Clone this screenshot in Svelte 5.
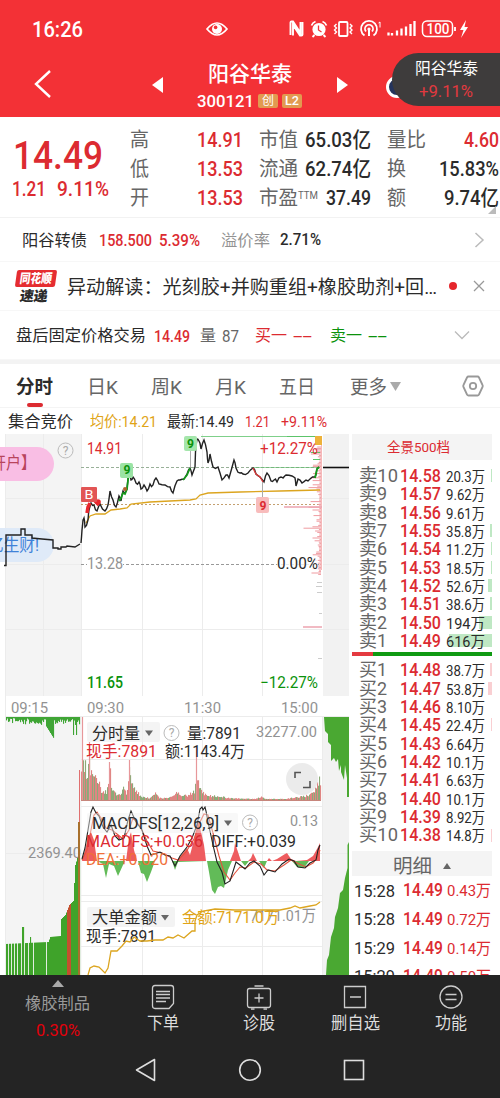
<script lang="ts">
    type Point = [number, number];

    const quotes = [
        [['高', 19], ['14.91', 46, 'red'], ['市值', 39], ['65.03亿', 66, 'dark'], ['量比', 39], ['4.60', 35, 'red']],
        [['低', 19], ['13.53', 46, 'red'], ['流通', 39], ['62.74亿', 66, 'dark'], ['换', 19], ['15.83%', 60, 'dark']],
        [['开', 19], ['13.53', 46, 'red'], ['市盈', 39], ['37.49', 45, 'dark'], ['额', 19], ['9.74亿', 55, 'dark']]
    ] as [string, number, string?][][];

    const tabs: [string, number][] = [['日K', 31], ['周K', 31], ['月K', 31], ['五日', 36]];

    // price, amount, depth bar width
    const sells: [string, string, number][] = [
        ['14.58', '20.3万', 1], ['14.57', '9.62万', 0], ['14.56', '9.61万', 0], ['14.55', '35.8万', 2],
        ['14.54', '11.2万', 1], ['14.53', '18.5万', 1], ['14.52', '52.6万', 4], ['14.51', '38.6万', 2],
        ['14.50', '194万', 13], ['14.49', '616万', 43]
    ];
    const buys: [string, string, number][] = [
        ['14.48', '38.7万', 2], ['14.47', '53.8万', 4], ['14.46', '8.10万', 0], ['14.45', '22.4万', 1],
        ['14.43', '6.64万', 0], ['14.42', '10.1万', 0], ['14.41', '6.63万', 0], ['14.40', '10.1万', 0],
        ['14.39', '8.92万', 0], ['14.38', '14.8万', 1]
    ];
    const deals = [['15:28', '0.43万'], ['15:28', '0.72万'], ['15:29', '0.14万'], ['15:29', '0.50万']];

    const auction = '4,565.5 6,565.5 6,535 21,535 21,529 25,529 25,535 32,535 32,538 42,539 53,540 53,548 58,548 58,549 61,549 61,547 66,547 67,546 75,547 80,544';
    const price: Point[] = [
        [81, 543], [82, 530], [83, 520], [84, 518], [85, 527], [88, 520], [89, 510], [91, 503], [94, 505], [97, 511],
        [100, 504], [105, 511], [108, 505], [110, 491], [113, 500], [116, 507], [119, 496], [121, 501], [123, 491],
        [125, 493], [127, 489], [129, 471], [131, 480], [133, 477], [136, 483], [139, 482], [141, 489], [144, 485],
        [147, 491], [150, 484], [153, 485], [156, 478], [159, 484], [165, 485], [170, 487], [173, 493], [177, 481],
        [180, 480], [184, 479], [187, 474], [190, 468], [192, 475], [195, 467], [195.5, 452], [197, 439], [199, 441],
        [201, 449], [204, 440], [207, 452], [208, 463], [210, 454], [213, 467], [218, 467], [222, 480], [226, 475],
        [229, 478], [234, 460], [236, 468], [240, 473], [243, 474], [248, 473], [253, 468], [256, 474], [260, 477],
        [264, 482], [267, 473], [271, 481], [274, 480], [277, 482], [281, 477], [283, 478], [286, 475], [292, 476],
        [295, 478], [296, 486], [298, 479], [302, 483], [306, 480], [310, 479], [315, 477], [317, 469], [319, 467]
    ];
    const average = '86,523 90,516 96,514 105,514 111,510 120,509 127,508 131,504 150,502 170,501 190,500 196,499 200,495 208,493 240,492 280,491 320,490';

    const diff = '82,859 85,848 88,830 91,812 93,807 96,813 99,816 103,827 107,832 111,825 115,836 119,840 124,838 128,820 131,811 136,822 142,830 147,846 151,855 160,852 165,855 170,856 175,866 180,856 187,847 192,838 197,825 200,809 202,807 203,810 205,807 206,811 208,822 213,845 217,862 222,872 225,884 230,881 236,862 240,865 245,869 250,863 254,861 260,866 264,875 268,870 275,872 282,864 289,859 294,861 298,867 305,868 310,863 316,860 318,850 320,845';
    const dea = '82,860 87,850 91,830 94,815 97,812 101,818 106,828 112,830 117,834 123,839 129,830 133,818 140,826 147,841 153,851 162,853 172,858 178,860 186,852 194,839 200,822 204,814 208,815 213,833 219,856 224,872 230,880 235,873 240,867 246,868 254,862 261,864 267,870 275,871 284,865 291,860 299,864 306,867 313,863 317,858 320,850';
    const bigOrders = '88,975 90,968 94,966 99,967 105,973 108,968 111,951 117,951 122,946 126,941 130,942 134,937 140,941 147,941 155,940 163,940 168,937 173,938 178,935 184,938 192,931 195,931 195,921 197,915 203,911 215,909 235,910 262,910 280,910 290,908 295,906 300,908 310,906 316,905 320,902';

    function noise(i: number): number {
        const v = Math.sin(i * 127.1 + 11.7) * 43758.5453;
        return v - Math.floor(v);
    }

    // subdivides a line and shakes the inner points
    function jitter(points: Point[], amount: number): string {
        return points.map(([x, y], i) => {
            const next = points[i + 1];
            if (!next) return `${x},${y}`;
            const midY = (y + next[1]) / 2 + (noise(i) - .5) * amount;
            return `${x},${y} ${(x + next[0]) / 2},${midY.toFixed(1)}`;
        }).join(' ');
    }

    function between(points: Point[], x: number): number {
        for (let i = 1; i < points.length; i++) {
            const [x0, y0] = points[i - 1];
            const [x1, y1] = points[i];
            if (x <= x1) return y0 + (y1 - y0) * (x - x0) / (x1 - x0);
        }
        return points[points.length - 1][1];
    }

    const volumeShape: Point[] = [
        [82, 30], [84, 44], [86, 28], [88, 22], [89, 40], [91, 26], [95, 20], [99, 20], [102, 8], [107, 8], [110, 30],
        [112, 12], [116, 6], [121, 6], [124, 16], [127, 6], [129, 32], [131, 16], [135, 12], [140, 4], [150, 2],
        [156, 8], [159, 2], [168, 2], [174, 4], [178, 8], [183, 4], [188, 5], [192, 7], [195, 8], [197, 30], [199, 12],
        [203, 8], [210, 4], [217, 4], [222, 4], [227, 2], [255, 1], [262, 3], [266, 1], [285, 1], [292, 2], [305, 4],
        [312, 6], [317, 14], [320, 20]
    ];
    const volume = Array.from({ length: 240 }, (_, i) => {
        const x = 81.5 + i;
        const h = between(volumeShape, x) * (.65 + noise(i) * .6);
        return { x, h: Math.max(1, h), up: noise(i + 400) > .48 };
    });

    const leftShape: Point[] = [[5, 31], [48, 33], [50, 38], [60, 39], [61, 56], [65, 60], [69, 70], [73, 74], [75, 110], [77, 117], [81, 117]];
    const gaps = [8, 11, 14, 17, 21, 24, 28, 33, 46];
    const leftBars = Array.from({ length: 74 }, (_, i) => {
        const x = 6 + i;
        return { x, h: x === 22 || x === 23 ? 48 : x === 30 ? 38 : between(leftShape, x), red: x >= 67 && x <= 70 };
    }).filter(it => !gaps.includes(it.x));
    const leftHanging = Array.from({ length: 74 }, (_, i) => {
        const x = 6 + i;
        let h = 1 + noise(i + 60) * 7;
        if (x > 45 && x < 54) h = 8 + (x - 45) * 1.6;
        if (x === 73 || x === 76) h = 18;
        if (x > 54 && x < 70) h = 2 + noise(i) * 5;
        return { x, h };
    });

    const redHills = '82,861 85,850 88,838 91,832 94,840 97,861 126,861 129,838 131,832 134,850 137,861 177,861 183,853 187,848 190,855 194,840 198,820 202,836 204,845 206,861 230,861 234,851 235,843 238,852 241,861 248,861 251,858 253,853 257,861 267,861 269,858 272,861 277,859 285,854 287,853 291,859 296,861 307,860 313,856 317,849 320,843 320,861';
    const greenHills = '97,861 103,864 106,878 109,864 114,866 118,876 123,865 125,861 138,861 141,873 144,874 147,882 151,872 155,861 172,861 175,870 178,862 207,861 209,872 212,890 215,894 218,887 221,886 224,888 228,870 232,861 241,861 245,866 249,861 259,861 264,868 267,861 292,861 297,867 304,868 309,861';

    const profile = Array.from({ length: 92 }, (_, i) => {
        const y = 447 + i * 1.4;
        const long: Record<number, number> = { 43: 12, 58: 17, 45: 8, 49: 7, 65: 8, 29: 12 };
        return { y, w: long[i] ?? 1 + Math.pow(noise(i + 90), 3) * 9 };
    });

    const actions = [['下单', 32], ['诊股', 32], ['删自选', 49], ['功能', 32]] as [string, number][];
</script>

{#snippet txt(text: string, width: number, size: number, kind = '')}
    <svg class="txt {kind}" {width} height={size}>
        <text x="0" y={size * .87} font-size={size} textLength={width} lengthAdjust="spacingAndGlyphs">{text}</text>
    </svg>
{/snippet}

{#snippet label(x: number, middle: number, text: string, width: number, size: number, kind = 'gray')}
    <text class={kind} {x} y={middle + size * .37} font-size={size} textLength={width} lengthAdjust="spacingAndGlyphs">{text}</text>
{/snippet}

{#snippet help(x: number, y: number)}
    <circle cx={x} cy={y} r="7.5" fill="none" stroke="#bbb" />
    <text class="help" {x} y={y + 4} font-size="12" text-anchor="middle">?</text>
{/snippet}

{#snippet level(name: string, wide: boolean, value: string, amount: string, depth: number, color: string)}
    <div class="level">
        <span class="level__name">{@render txt(name, wide ? 39 : 28, 18.5, 'label')}</span>
        <span class="level__price">{@render txt(value, 41, 18.5, 'red medium')}</span>
        <span class="level__amount">{@render txt(amount, 39, 14.5, 'dark')}</span>
        <svg class="level__depth" width="43" height="13"><rect x={43 - depth} width={depth} height="13" fill={color} /></svg>
    </div>
{/snippet}

<main class="screen">
    <header class="header">
        <div class="status">
            <div class="status__time">{@render txt('16:26', 51, 22, 'medium')}</div>
            <svg class="status__eye" width="24" height="18" viewBox="0 0 24 18" fill="none" stroke="#fff" stroke-width="1.7">
                <path d="M2 9Q12-3 22 9Q12 21 2 9Z" />
                <circle cx="12" cy="9" r="5" fill="#fff" stroke="none" />
                <circle cx="10.6" cy="7.4" r="1.8" fill="#f33136" stroke="none" />
            </svg>
            <svg width="184" height="24" viewBox="288 17 184 24" fill="none" stroke="#fff" stroke-width="1.8">
                <path d="M290.5 35V22.500Q290.500 21.500 291.500 21.500H293L300.500 33V22M302.500 22V34.500Q302.500 35.500 301.500 35.500H300L293 25V35.500" stroke-width="1.900" />
                <circle cx="319" cy="29.500" r="6.600" fill="#fff" stroke="none" />
                <path d="M311.500 25.500a7 7 0 0 1 4-4M322.500 21.500a7 7 0 0 1 4 4M314.500 35l-2 2M323.500 35l2 2" />
                <path d="M318.500 25.500v4.500l3 2" stroke="#f33136" stroke-width="1.3" />
                <rect x="339" y="22" width="8.500" height="14" rx="1" />
                <path d="M336.500 24l-2 2 2 2-2 2 2 2-2 2M350 24l2 2-2 2 2 2-2 2 2 2" stroke-width="1.4" />
                <path d="M364.500 35.500a8 8 0 1 1 9 0" />
                <path d="M366 31.500a4 4 0 1 1 6 0" />
                <circle cx="369" cy="29" r="1.600" fill="#fff" stroke="none" />
                <path d="M369 29v7" stroke-width="2" />
                <path d="M378.500 23l1.500-1v5.500" stroke-width="1" />
                <path d="M388.500 35.500v-3M392 35.500v-2.500M397 35.500v-5M401.500 35.500v-7M406 35.500v-9M410.500 36v-12M414.500 36v-15" stroke-width="2.300" />
                <rect x="422.500" y="21" width="30" height="15.500" rx="4.500" stroke-width="1.500" />
                <path d="M455 27v4" />
                <text class="battery" x="426.500" y="33.800" font-size="14" textLength="23" lengthAdjust="spacingAndGlyphs">100</text>
                <path d="M466 20l-6 10h3.500l-2.500 8 7-11h-3.500z" fill="#fff" stroke="none" />
            </svg>
        </div>
        <div class="title">
            <svg class="title__back" width="20" height="30" viewBox="0 0 20 30" fill="none" stroke="#fff" stroke-width="2.400"><path d="M17 2L3 15L17 28" /></svg>
            <svg class="title__prev" width="11" height="16"><path d="M11 0V16L0 8Z" fill="#fff" /></svg>
            <div class="title__name">
                {@render txt('阳谷华泰', 84, 21, 'medium')}
                <div class="title__code">
                    {@render txt('300121', 57, 17, 'medium')}
                    <span class="badge">{@render txt('创', 12, 12)}</span>
                    <span class="badge">{@render txt('L2', 14, 13, 'medium')}</span>
                </div>
            </div>
            <svg class="title__next" width="11" height="16"><path d="M0 0V16L11 8Z" fill="#fff" /></svg>
        </div>
        <div class="orb"></div>
        <div class="float">
            {@render txt('阳谷华泰', 63, 16)}
            {@render txt('+9.11%', 54, 17, 'float__rate')}
        </div>
    </header>

    <section class="quote">
        <div class="quote__price">
            {@render txt('14.49', 90, 39.5, 'red medium')}
            <div class="quote__change">
                {@render txt('1.21', 34, 20, 'red medium')}
                {@render txt('9.11%', 52, 20, 'red medium')}
            </div>
        </div>
        <div class="quote__grid">
            {#each quotes as row}
                {#each row as [text, width, kind]}
                    <div class="quote__cell" class:quote__cell_value={kind}>
                        {@render txt(text, width, kind ? 21 : 20, kind ? kind + ' medium' : 'label')}
                        {#if text === '市盈'}
                            <span class="quote__ttm">{@render txt('TTM', 20, 10, 'label')}</span>
                        {/if}
                    </div>
                {/each}
            {/each}
        </div>
        <svg class="quote__corner" width="8" height="8"><path d="M8 0V8H0Z" fill="#bbb" /></svg>
    </section>

    <section class="row bond">
        {@render txt('阳谷转债', 65, 16, 'dark')}
        <span class="bond__price">{@render txt('158.500', 53, 17, 'red medium')}</span>
        <span class="bond__rate">{@render txt('5.39%', 41, 17, 'red medium')}</span>
        <span class="bond__premium">{@render txt('溢价率', 49, 16, 'gray')}</span>
        <span class="bond__percent">{@render txt('2.71%', 41, 16.5, 'dark medium')}</span>
        <svg class="push" width="11" height="16" fill="none" stroke="#bbb" stroke-width="1.500"><path d="M1.500 1L9 8L1.500 15" /></svg>
    </section>

    <section class="row news">
        <div class="logo">
            <div class="logo__top">{@render txt('同花顺', 32, 13, 'black')}</div>
            <div class="logo__bottom">{@render txt('速递', 28, 14, 'dark black')}</div>
        </div>
        {@render txt('异动解读：光刻胶+并购重组+橡胶助剂+回…', 370, 19, 'dark')}
        <span class="news__dot"></span>
        <svg width="12" height="12" fill="none" stroke="#999" stroke-width="1.300"><path d="M1 1L11 11M11 1L1 11" /></svg>
    </section>

    <section class="row after">
        {@render txt('盘后固定价格交易', 130, 16, 'dark')}
        <span class="after__price">{@render txt('14.49', 36, 17, 'red medium')}</span>
        <span class="after__volume">
            {@render txt('量', 16, 16, 'label')}
            {@render txt('87', 17, 17, 'label')}
        </span>
        <span class="after__buy">
            {@render txt('买一', 32, 16, 'red')}
            {@render txt('--', 19, 17, 'red')}
        </span>
        <span class="after__sell">
            {@render txt('卖一', 32, 16, 'green')}
            {@render txt('--', 19, 17, 'green')}
        </span>
        <svg class="push" width="16" height="10" fill="none" stroke="#bbb" stroke-width="1.300"><path d="M1 1.500L8 8.500L15 1.500" /></svg>
    </section>

    <nav class="tabs">
        <div class="tab tab_active">{@render txt('分时', 37, 18.5, 'dark bold')}</div>
        {#each tabs as [name, width]}
            <div class="tab">{@render txt(name, width, 19, 'label')}</div>
        {/each}
        <div class="tab tab_more">
            {@render txt('更多', 37, 19, 'label')}
            <svg width="11" height="9"><path d="M0 0H11L5.500 9Z" fill="#aaa" /></svg>
        </div>
        <svg class="tabs__settings" width="22" height="22" viewBox="0 0 22 22" fill="none" stroke="#999" stroke-width="1.800">
            <path d="M6.500 1.500H15.500Q16.500 1.500 17 2.500L20.500 10Q21 11 20.500 12L17 19.500Q16.500 20.500 15.500 20.500H6.500Q5.500 20.500 5 19.500L1.500 12Q1 11 1.500 10L5 2.500Q5.500 1.500 6.500 1.500Z" />
            <circle cx="11" cy="11" r="3.200" />
        </svg>
    </nav>

    <div class="body">
        <div class="charts">
            <div class="summary">
                {@render txt('集合竞价', 65, 16, 'dark')}
                <span class="summary__average">{@render txt('均价:14.21', 67, 15.5, 'gold')}</span>
                <span class="summary__last">{@render txt('最新:14.49', 67, 15.5, 'dark')}</span>
                <span class="summary__diff">{@render txt('1.21', 25, 15.5, 'red')}</span>
                <span class="summary__rate">{@render txt('+9.11%', 46, 15.5, 'red')}</span>
            </div>
            <svg class="plot" width="349" height="541" viewBox="0 434 349 541">
                <rect x="5" y="434" width="76.500" height="262" fill="#f4f4f4" />
                <rect x="323" y="434" width="26" height="262" fill="#f2f2f2" />
                <rect x="5" y="716" width="76.500" height="259" fill="#f4f4f4" />
                <rect x="323" y="716" width="26" height="259" fill="#f2f2f2" />
                <path class="grid" d="M5.500 434V975M43.500 434V696M43.500 716V975M81.500 434V696M142.500 434V696M202.500 434V696M262.500 434V696M142.500 716V975M202.500 716V975M262.500 716V975M322.500 716V975" />
                <path class="grid" d="M5 498.500H349M5 564.500H81M323 564.500H349M5 629.500H349M5 716.500H349M81 759.500H322M81 806.500H322M5 853.500H349M81 895.500H322M81 901.500H322M81 946.500H322" />

                <!-- floating promos -->
                <rect x="-20" y="447" width="74" height="34" rx="17" fill="#f9bee4" />
                {@render label(-9, 463, '开户】', 45, 17, 'promo-pink')}
                <rect x="-20" y="528" width="74" height="34" rx="17" fill="#dfeaf8" />
                {@render label(-12, 545, '亿生财!', 51, 17, 'promo-blue')}
                {@render help(65.500, 450.500)}

                <path d="M81 467.500H320" stroke="#98b098" stroke-dasharray="3 2" />
                <path d="M81 504.500H320" stroke="#c4a070" stroke-dasharray="2 2" />
                <path d="M81 564.500H320" stroke="#999" stroke-dasharray="3 2" />
                <path d="M201 436.500H320" stroke="#7fd08a" />
                <path d="M253 467.500H320" stroke="#5fba6a" opacity=".6" />

                {#each profile as bar}
                    <path d="M{320.500 - bar.w} {bar.y}H321" stroke="#ef9ba0" stroke-width="1" />
                {/each}
                <path d="M321.500 436V570" stroke="#f6b9b9" />
                <path d="M284 507H322M303 627H322" stroke="#eda4b0" stroke-width="1.500" />
                <path d="M317 582.500H322M316 586.500H322M317 592.500H322M319 613.500H322M318 658.500H322" stroke="#ccc" />
                <path d="M287 436.500H316M311 452.500H320M313 459.500H320" stroke="#5cc46a" />
                <rect x="315" y="436" width="7" height="9" fill="#eeb23a" />
                <path d="M323 467.500H349" stroke="#111" stroke-width="1.600" />

                <polyline points={auction} class="line" />
                <polyline points={average} class="line line_gold" />
                <polyline points={jitter(price, 4)} class="line" />
                <path class="line line_green" d="M119 501L121 498L123 493L125 494L127 489L129 471M183 480L187 475L190 468M315 478L317 469L319 467" />
                <path class="line line_red" d="M253 468L256 474L260 477L263 482" />
                <path d="M87 513L88 507L90 503M95 501L99 505" stroke="#e8282e" stroke-width="3.500" fill="none" />
                <circle cx="98" cy="502" r="2.800" fill="#e8282e" />
                <circle cx="125" cy="489" r="2" fill="#b0642e" />

                <path d="M190.500 450V467M262.500 482V498" stroke="#aaa" />
                <rect x="81" y="487" width="16" height="15" rx="1" fill="#e25555" />
                {@render label(84.500, 494.500, 'B', 9, 13, 'white')}
                <rect x="120" y="463" width="13" height="15" rx="2" fill="#9be3a4" />
                {@render label(123.500, 470, '9', 7, 12, 'green bold')}
                <rect x="184" y="436" width="13" height="15" rx="2" fill="#a5e6ac" />
                {@render label(187, 443, '9', 7, 13, 'green bold')}
                <rect x="256" y="497" width="13" height="16" rx="2" fill="#f8bcbc" />
                {@render label(259.500, 505.500, '9', 7, 13, 'red bold')}

                {@render label(87, 448, '14.91', 35, 16, 'red')}
                {@render label(260, 448, '+12.27%', 58, 16, 'red')}
                <rect x="87" y="557" width="36" height="14" fill="#fff" />
                {@render label(87, 563, '13.28', 36, 16, 'gray')}
                <rect x="277" y="557" width="41" height="14" fill="#fff" opacity=".8" />
                {@render label(277, 563, '0.00%', 41, 16, 'dark')}
                {@render label(87, 682, '11.65', 36, 16, 'green medium')}
                {@render label(260, 682, '−12.27%', 58, 16, 'green')}

                {@render label(11, 707, '09:15', 37, 15.5)}
                {@render label(87, 707, '09:30', 37, 15.5)}
                {@render label(184, 707, '11:30', 37, 15.5)}
                {@render label(281, 707, '15:00', 37, 15.5)}

                <!-- call auction volume -->
                {#each leftHanging as bar}
                    <rect x={bar.x} y="717" width="1.100" height={bar.h} fill="#3fa535" />
                {/each}
                {#each leftBars as bar}
                    <rect x={bar.x} y={975 - bar.h} width="1.100" height={bar.h} fill={bar.red ? '#c4502e' : '#3fa32a'} />
                {/each}
                {@render label(28, 852, '2369.40', 53, 15.5)}
                <path d="M79.500 770V822" stroke="#e07070" />
                <path d="M79 822V975" stroke="#a8702c" stroke-width="2" />

                <path d="M324 717H349V797H347V778L345 765L344 780L341 772V765L339 771L338 759L336 762L334 758L331 761V745L328 742V734L325 731Z" fill="#4aa832" />
                <path d="M349 842L347.500 845V868L345 878L343 890L340 893L338 908L335 917L334 928L331 937L329 955L327 960L326 975H349Z" fill="#4aa832" />

                {#each volume as bar}
                    <rect x={bar.x - .5} y={800 - bar.h} width="1.100" height={bar.h} fill={bar.up ? '#df8583' : '#8caa78'} />
                {/each}
                <path d="M82.500 717V800M89.500 742V800M109.500 762V800M129.500 760V800M196.500 746V800" stroke="#e7979a" stroke-width="1.200" />
                <path d="M81 800.500H321" stroke="#c7867c" />

                <polygon points={redHills} fill="#ee5c5f" />
                <polygon points={greenHills} fill="#62bb58" />
                <polyline points={dea} class="line line_dea" />
                <polyline points={diff} class="line line_diff" />

                <rect x="87" y="722" width="73" height="20" rx="2" fill="#f0f0f0" opacity=".7" />
                {@render label(92, 733, '分时量', 48, 16, 'dark')}
                <path d="M145 730.500H153L149 736Z" fill="#666" />
                {@render help(171.500, 733)}
                {@render label(187, 733, '量:7891', 54, 16, 'dark')}
                {@render label(256, 731, '32277.00', 61, 15.5)}
                {@render label(86, 751.500, '现手:7891', 71, 16, 'red')}
                {@render label(165, 751.500, '额:1143.4万', 80, 16, 'dark')}
                <circle cx="302" cy="779" r="16" fill="#e9e9e9" opacity=".9" />
                <path d="M295 778V772.500H301M303 787.500H310V781" fill="none" stroke="#555" stroke-width="1.600" />

                <rect x="87" y="813" width="151" height="20" rx="2" fill="#f0f0f0" opacity=".45" />
                {@render label(92, 823, 'MACDFS[12,26,9]', 127, 16, 'dark')}
                <path d="M224 820.500H232L228 826Z" fill="#666" />
                {@render help(250, 822.500)}
                {@render label(290, 820.500, '0.13', 28, 15.5)}
                {@render label(86, 841, 'MACDFS:+0.036', 117, 16, 'red')}
                {@render label(211, 841, 'DIFF:+0.039', 85, 16, 'dark')}
                {@render label(86, 859.500, 'DEA:+0.020', 82, 16, 'orange')}

                <rect x="87" y="907" width="88" height="20" rx="2" fill="#f0f0f0" opacity=".8" />
                {@render label(92, 917.500, '大单金额', 65, 16, 'dark')}
                <path d="M161 915H169L165 920.500Z" fill="#666" />
                {@render label(250, 915, '7171.01万', 66, 15.5)}
                {@render label(182, 917.500, '金额:7171.0万', 97, 16, 'gold')}
                {@render label(86, 936, '现手:7891', 70, 16, 'dark')}
                <polyline points={bigOrders} class="line line_gold" />
            </svg>
        </div>

        <aside class="book">
            <div class="book__head">{@render txt('全景500档', 63, 13.5, 'red')}</div>
            <div class="levels">
                {#each sells as [value, amount, depth], i}
                    {@render level('卖' + (10 - i), i === 0, value, amount, depth, '#bfe8c4')}
                {/each}
            </div>
            <div class="ratio"></div>
            <div class="levels levels_buy">
                {#each buys as [value, amount, depth], i}
                    {@render level('买' + (i + 1), i === 9, value, amount, depth, '#f9cfd2')}
                {/each}
            </div>
            <div class="deals__head">
                {@render txt('明细', 39, 19.5, 'label')}
                <svg width="8" height="6"><path d="M4 0L8 6H0Z" fill="#666" /></svg>
            </div>
            {#each deals as [time, amount]}
                <div class="deal">
                    {@render txt(time, 41, 17, 'dark')}
                    <span class="deal__price">{@render txt('14.49', 40, 17.5, 'red medium')}</span>
                    <span class="deal__amount">{@render txt(amount, 44, 15.5, 'red')}</span>
                </div>
            {/each}
        </aside>
    </div>

    <footer class="footer">
        <div class="actions">
            <div class="sector">
                <svg width="12" height="7"><path d="M6 0L12 7H0Z" fill="#aaa" /></svg>
                <span class="sector__name">{@render txt('橡胶制品', 65, 16)}</span>
                {@render txt('0.30%', 44, 17, 'sector__rate')}
            </div>
            {#each actions as [name, width], i}
                <div class="action">
                    <svg width="26" height="26" viewBox="0 0 26 26" fill="none" stroke="#ccc" stroke-width="1.300">
                        {#if i === 0}
                            <path d="M5 1.500H21Q23.500 1.500 23.500 4V19.500L19 24.500H5Q2.500 24.500 2.500 22V4Q2.500 1.500 5 1.500ZM6 7.500H20M6 10.500H20M6 14H20M6 17.500H16" />
                        {:else if i === 1}
                            <path d="M3.500 4.500H22.500Q24.500 4.500 24.500 6.500V21Q24.500 23.500 22.500 23.500H3.500Q1.500 23.500 1.500 21V6.500Q1.500 4.500 3.500 4.500ZM8.500 2H17.500M13 9.500V18.500M8.500 14H17.500M5 25.200H8.500M17.500 25.200H21" />
                        {:else if i === 2}
                            <path d="M2.500 2.500H23.500V23.500H2.500ZM8 13H19" />
                        {:else}
                            <circle cx="13" cy="13" r="11" />
                            <path d="M7.500 10.500H18.500M7.500 15.500H18.500" />
                        {/if}
                    </svg>
                    {@render txt(name, width, 16.5)}
                </div>
            {/each}
        </div>
        <div class="system">
            <svg width="24" height="24" fill="none" stroke="#ddd" stroke-width="1.600" stroke-linejoin="round"><path d="M20.500 1.500V22.500L2.500 12Z" /></svg>
            <svg width="24" height="24" fill="none" stroke="#ddd" stroke-width="1.600"><circle cx="12" cy="12" r="10.300" /></svg>
            <svg width="24" height="24" fill="none" stroke="#ddd" stroke-width="1.600"><rect x="2.500" y="2.500" width="19" height="19" /></svg>
        </div>
    </footer>
</main>

<style>
    :global(body) {
        background: #fff;
        overflow: hidden;
    }

    .screen {
        display: flex;
        flex-direction: column;
        width: 500px;
        height: 1098px;
        overflow: hidden;
        color: #fff;
        font-family: Roboto, 'Noto Sans CJK SC', sans-serif;
    }

    svg {
        display: block;
        flex: none;
    }

    .txt {
        overflow: visible;
        fill: currentColor;
    }

    .medium { font-weight: 500; }
    .bold { font-weight: 700; }
    .black { font-weight: 900; }
    .red { color: #dc2b31; fill: #dc2b31; }
    .green { color: #0b920b; fill: #0b920b; }
    .dark { color: #2b2b2b; fill: #2b2b2b; }
    .label { color: #666; fill: #666; }
    .gray { color: #929292; fill: #929292; }
    .gold { color: #e0a416; fill: #e0a416; }
    .orange { fill: #f07038; }
    .white { fill: #fff; }
    .help { fill: #aaa; }
    .promo-pink { fill: #b8455c; }
    .promo-blue { fill: #3f82d8; }

    .header {
        position: relative;
        flex: none;
        height: 117px;
        background: #f33136;
    }

    .status {
        display: flex;
        align-items: center;
        height: 58px;
        padding-left: 32px;
    }

    .status__time {
        width: 173px;
    }

    .status__eye {
        margin-right: 59px;
    }

    .battery {
        fill: #fff;
        stroke: none;
        font-weight: 500;
    }

    .title {
        display: flex;
        align-items: flex-start;
        height: 59px;
    }

    .title__back {
        margin: 11px 0 0 33px;
    }

    .title__prev {
        margin: 19px 0 0 99px;
    }

    .title__name {
        display: flex;
        flex-direction: column;
        align-items: center;
        width: 105px;
        margin: 5px 0 0 34px;
    }

    .title__code {
        display: flex;
        align-items: center;
        gap: 4px;
        margin-top: 8px;
    }

    .title__next {
        margin: 19px 0 0 35px;
    }

    .badge {
        display: flex;
        align-items: center;
        justify-content: center;
        width: 20px;
        height: 14px;
        border-radius: 2px;
        background: #e29a50;
    }

    .orb {
        position: absolute;
        top: 76px;
        left: 386px;
        box-sizing: border-box;
        width: 22px;
        height: 22px;
        border: 3px solid #fff;
        border-radius: 50%;
        background: #25345c;
    }

    .float {
        position: absolute;
        top: 53px;
        right: 0;
        display: flex;
        flex-direction: column;
        align-items: center;
        gap: 6px;
        width: 108px;
        height: 46px;
        padding-top: 7px;
        border-radius: 27px 0 0 27px;
        background: #3e3c3c;
    }

    :global(.float__rate) {
        color: #e2393f;
    }

    .quote {
        position: relative;
        display: flex;
        flex: none;
        height: 101px;
        border-bottom: 1px solid #f2f2f2;
        box-sizing: border-box;
    }

    .quote__price {
        width: 117px;
        padding: 18px 0 0 13px;
    }

    .quote__change {
        display: flex;
        gap: 11px;
        margin: 4px 0 0 -1px;
    }

    .quote__grid {
        display: grid;
        grid-template-columns: 42px 71px 55px 73px 55px 73px;
        grid-template-rows: repeat(3, 29px);
        padding-top: 8px;
    }

    .quote__cell {
        display: flex;
        align-items: center;
    }

    .quote__cell:nth-child(6n + 3),
    .quote__cell:nth-child(6n + 5) {
        padding-left: 16px;
    }

    .quote__cell_value {
        justify-content: flex-end;
    }

    .quote__ttm {
        margin-bottom: 6px;
    }

    .quote__corner {
        position: absolute;
        right: 4px;
        bottom: 3px;
    }

    .row {
        display: flex;
        flex: none;
        align-items: center;
        box-sizing: border-box;
        border-bottom: 1px solid #f7f7f7;
    }

    .push {
        margin-left: auto;
    }

    .bond {
        height: 44px;
        padding: 0 15px 0 22px;
    }

    .bond__price { margin-left: 12px; }
    .bond__rate { margin-left: 7px; }
    .bond__premium { margin-left: 21px; }
    .bond__percent { margin-left: 10px; }

    .news {
        height: 49px;
        padding: 0 15px 0 16px;
    }

    .logo {
        width: 40px;
        margin-right: 11px;
    }

    .logo__top {
        display: flex;
        align-items: center;
        justify-content: center;
        height: 17px;
        border-radius: 2px;
        background: #e52d31;
        transform: skewX(-8deg);
    }

    .logo__bottom {
        display: flex;
        justify-content: center;
        padding: 2px 4px 0 0;
        transform: skewX(-8deg);
    }

    .news__dot {
        width: 8px;
        height: 8px;
        margin: 0 16px 0 12px;
        border-radius: 50%;
        background: #e5262c;
    }

    .after {
        height: 49px;
        padding: 0 30px 0 16px;
    }

    .after__price { margin-left: 8px; }

    .after__volume,
    .after__buy,
    .after__sell {
        display: flex;
        align-items: center;
        gap: 6px;
    }

    .after__volume { margin-left: 10px; }
    .after__buy { margin-left: 16px; }
    .after__sell { margin-left: 18px; }

    .tabs {
        display: flex;
        flex: none;
        align-items: center;
        box-sizing: border-box;
        height: 48px;
        padding: 1px 16px 0 16px;
        border-top: 4px solid #f3f3f3;
        border-bottom: 1px solid #f4f4f4;
    }

    .tab {
        width: 64px;
    }

    .tab_active {
        position: relative;
        width: 71px;
    }

    .tab_active::after {
        content: '';
        position: absolute;
        top: 26px;
        left: 11px;
        width: 16px;
        height: 4px;
        border-radius: 2px;
        background: #dc2b31;
    }

    .tab_more {
        display: flex;
        align-items: center;
        gap: 3px;
        margin-left: 7px;
    }

    .tabs__settings {
        margin-left: auto;
    }

    .body {
        display: flex;
        flex: none;
        height: 567px;
        overflow: hidden;
    }

    .charts {
        width: 352px;
    }

    .summary {
        display: flex;
        align-items: center;
        height: 26px;
        padding-left: 8px;
    }

    .summary__average { margin-left: 17px; }
    .summary__last { margin-left: 10px; }
    .summary__diff { margin-left: 11px; }
    .summary__rate { margin-left: 11px; }

    .grid {
        fill: none;
        stroke: #ececec;
    }

    .line {
        fill: none;
        stroke: #222;
        stroke-width: 1.4;
    }

    .line_gold { stroke: #dca51f; stroke-width: 1.3; }
    .line_green { stroke: #15991c; stroke-width: 1.8; }
    .line_red { stroke: #d93a3a; }
    .line_dea { stroke: #e5533f; stroke-width: 1.1; }
    .line_diff { stroke-width: 1.1; }

    .book {
        width: 140px;
        padding-top: 26px;
    }

    .book__head {
        display: flex;
        align-items: center;
        justify-content: center;
        height: 26px;
        padding-right: 7px;
        background: #f4f4f4;
        box-sizing: border-box;
    }

    .levels {
        padding-top: 6px;
    }

    .levels_buy {
        padding-top: 4px;
    }

    .level {
        position: relative;
        display: flex;
        align-items: center;
        height: 18.35px;
        padding-left: 7px;
    }

    .level__name {
        width: 41px;
    }

    .level__price {
        width: 46px;
    }

    .level__amount {
        z-index: 1;
        padding-top: 2px;
    }

    .level__depth {
        position: absolute;
        right: 0;
        top: 3px;
    }

    .ratio {
        height: 4px;
        margin-top: 3px;
        background: linear-gradient(90deg, #e43a40 21px, #0f9a12 21px);
    }

    .deals__head {
        display: flex;
        align-items: center;
        justify-content: center;
        gap: 11px;
        box-sizing: border-box;
        height: 25px;
        margin-top: 7px;
        padding-top: 5px;
        background: #f4f4f4;
    }

    .deal {
        display: flex;
        align-items: center;
        height: 28.6px;
        padding-left: 2px;
    }

    .deal__price { margin-left: 8px; }
    .deal__amount { margin-left: 4px; }

    .footer {
        flex: 1;
        background: #242424;
    }

    .actions {
        display: flex;
        height: 68px;
        color: #ddd;
    }

    .sector {
        display: flex;
        flex-direction: column;
        align-items: center;
        width: 115px;
        padding-top: 5px;
        color: #999;
    }

    .sector__name {
        margin: 8px 0 10px;
    }

    :global(.sector__rate) {
        color: #e3000b;
    }

    .action {
        display: flex;
        flex-direction: column;
        align-items: center;
        gap: 5px;
        width: 96px;
        padding-top: 9px;
    }

    .system {
        display: flex;
        justify-content: center;
        gap: 80px;
        padding-top: 15px;
    }
</style>
